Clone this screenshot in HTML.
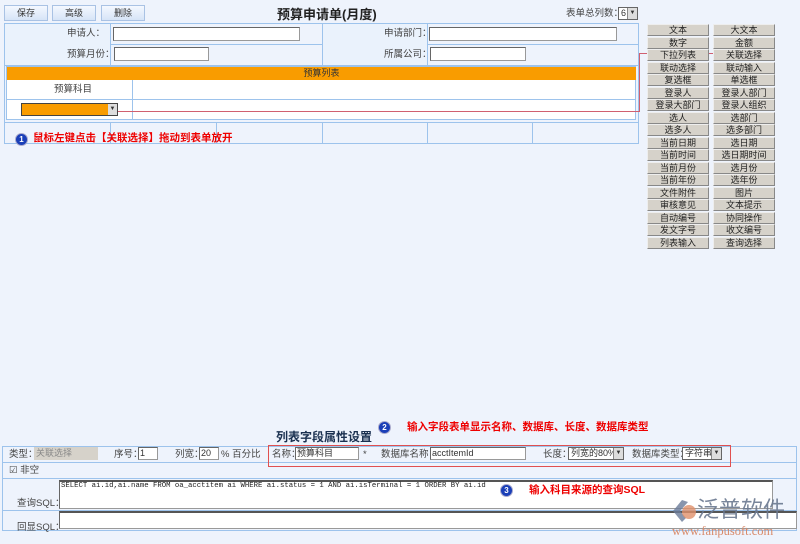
<!DOCTYPE html>
<html><head><meta charset="utf-8"><style>
*{margin:0;padding:0;box-sizing:border-box}
body{width:800px;height:544px;background:#eef3fc;font-family:"Liberation Sans","Noto Sans CJK SC",sans-serif;font-size:10px;line-height:1;color:#333;position:relative;overflow:hidden}
.a{position:absolute}
.btn{position:absolute;top:5px;height:16px;width:44px;background:linear-gradient(#f4f8ff,#d6e4f7);border:1px solid #a9c2e4;text-align:center;line-height:14px;font-size:9px}
.ln{position:absolute;background:#9dc3ec}
.inp{position:absolute;background:#fff;border:1px solid #999;border-top-color:#666;border-left-color:#666;height:14px}
.lbl{position:absolute;font-size:9.5px;color:#444;line-height:1}
.gb{position:absolute;width:62px;height:12px;background:#d6d2ca;border:1px solid #888;border-top-color:#eee;border-left-color:#eee;text-align:center;line-height:10px;font-size:9px;color:#222}
.red{color:#e00;font-weight:bold;font-size:10.5px;position:absolute;line-height:1}
.num{position:absolute;width:13px;height:13px;border-radius:50%;background:#1a3fb8;border:1px solid #aac;color:#fff;font-size:8px;font-weight:bold;text-align:center;line-height:11px}
.sel{position:absolute;background:#fff;border:1px solid #666;height:13px;font-size:9px;line-height:11px;padding-left:2px}
.sel i{position:absolute;right:0;top:0;width:10px;height:11px;background:#ddd;border-left:1px solid #888;font-style:normal;font-size:6px;text-align:center;line-height:11px}
</style></head><body>
<div class="btn" style="left:4px">保存</div>
<div class="btn" style="left:52px">高级</div>
<div class="btn" style="left:101px">删除</div>
<div class="a" style="left:277px;top:8px;font-size:13px;font-weight:bold;color:#222">预算申请单(月度)</div>
<div class="lbl" style="left:566px;top:9px">表单总列数：</div>
<div class="sel" style="left:618px;top:7px;width:20px">6<i>▼</i></div>

<div class="a" style="left:4px;top:23px;width:635px;height:121px;border:1px solid #9dc3ec"></div>
<div class="ln" style="left:4px;top:44px;width:635px;height:1px"></div>
<div class="ln" style="left:4px;top:65px;width:635px;height:1px"></div>
<div class="ln" style="left:4px;top:122px;width:635px;height:1px"></div>
<div class="ln" style="left:110px;top:23px;width:1px;height:42px"></div>
<div class="ln" style="left:322px;top:23px;width:1px;height:42px"></div>
<div class="ln" style="left:427px;top:23px;width:1px;height:42px"></div>
<div class="a" style="left:5px;top:24px;width:105px;height:41px;background:#eaf2fc"></div>
<div class="a" style="left:323px;top:24px;width:104px;height:41px;background:#eaf2fc"></div>
<div class="lbl" style="left:67px;top:29px">申请人：</div>
<div class="inp" style="left:113px;top:27px;width:187px"></div>
<div class="lbl" style="left:384px;top:29px">申请部门：</div>
<div class="inp" style="left:429px;top:27px;width:188px"></div>
<div class="lbl" style="left:67px;top:50px">预算月份：</div>
<div class="inp" style="left:114px;top:47px;width:95px"></div>
<div class="lbl" style="left:384px;top:50px">所属公司：</div>
<div class="inp" style="left:430px;top:47px;width:96px"></div>
<div class="a" style="left:6px;top:66px;width:630px;height:54px;border:1px solid #9dc3ec;background:#fff"></div>
<div class="a" style="left:7px;top:67px;width:629px;height:13px;background:#f99c00;text-align:center;font-size:9px;line-height:13px;color:#333">预算列表</div>
<div class="ln" style="left:7px;top:99px;width:629px;height:1px"></div>
<div class="ln" style="left:132px;top:80px;width:1px;height:40px"></div>
<div class="lbl" style="left:54px;top:85px">预算科目</div>
<div class="a" style="left:21px;top:103px;width:97px;height:13px;background:#f99c00;border:1px solid #444"></div>
<div class="a" style="left:108px;top:104px;width:9px;height:11px;background:#ddd;font-size:6px;text-align:center;line-height:11px">▼</div>
<div class="ln" style="left:110px;top:122px;width:1px;height:22px"></div>
<div class="ln" style="left:216px;top:122px;width:1px;height:22px"></div>
<div class="ln" style="left:322px;top:122px;width:1px;height:22px"></div>
<div class="ln" style="left:427px;top:122px;width:1px;height:22px"></div>
<div class="ln" style="left:532px;top:122px;width:1px;height:22px"></div>
<div class="a" style="left:118px;top:111px;width:522px;height:1px;background:#d06070"></div>
<div class="a" style="left:639px;top:53px;width:1px;height:59px;background:#d06070"></div>
<div class="a" style="left:639px;top:53px;width:82px;height:1px;background:#d06070"></div>
<div class="a" style="left:719px;top:52px;width:3px;height:3px;background:#e00;border-radius:50%"></div>
<div class="num" style="left:15px;top:133px">1</div>
<div class="red" style="left:33px;top:133px">鼠标左键点击【关联选择】拖动到表单放开</div>

<div class="gb" style="left:647px;top:24px">文本</div><div class="gb" style="left:713px;top:24px">大文本</div>
<div class="gb" style="left:647px;top:37px">数字</div><div class="gb" style="left:713px;top:37px">金额</div>
<div class="gb" style="left:647px;top:49px">下拉列表</div><div class="gb" style="left:713px;top:49px">关联选择</div>
<div class="gb" style="left:647px;top:62px">联动选择</div><div class="gb" style="left:713px;top:62px">联动输入</div>
<div class="gb" style="left:647px;top:74px">复选框</div><div class="gb" style="left:713px;top:74px">单选框</div>
<div class="gb" style="left:647px;top:87px">登录人</div><div class="gb" style="left:713px;top:87px">登录人部门</div>
<div class="gb" style="left:647px;top:99px">登录大部门</div><div class="gb" style="left:713px;top:99px">登录人组织</div>
<div class="gb" style="left:647px;top:112px">选人</div><div class="gb" style="left:713px;top:112px">选部门</div>
<div class="gb" style="left:647px;top:124px">选多人</div><div class="gb" style="left:713px;top:124px">选多部门</div>
<div class="gb" style="left:647px;top:137px">当前日期</div><div class="gb" style="left:713px;top:137px">选日期</div>
<div class="gb" style="left:647px;top:149px">当前时间</div><div class="gb" style="left:713px;top:149px">选日期时间</div>
<div class="gb" style="left:647px;top:162px">当前月份</div><div class="gb" style="left:713px;top:162px">选月份</div>
<div class="gb" style="left:647px;top:174px">当前年份</div><div class="gb" style="left:713px;top:174px">选年份</div>
<div class="gb" style="left:647px;top:187px">文件附件</div><div class="gb" style="left:713px;top:187px">图片</div>
<div class="gb" style="left:647px;top:199px">审核意见</div><div class="gb" style="left:713px;top:199px">文本提示</div>
<div class="gb" style="left:647px;top:212px">自动编号</div><div class="gb" style="left:713px;top:212px">协同操作</div>
<div class="gb" style="left:647px;top:224px">发文字号</div><div class="gb" style="left:713px;top:224px">收文编号</div>
<div class="gb" style="left:647px;top:237px">列表输入</div><div class="gb" style="left:713px;top:237px">查询选择</div>

<div class="num" style="left:378px;top:421px">2</div>
<div class="red" style="left:407px;top:422px">输入字段表单显示名称、数据库、长度、数据库类型</div>
<div class="a" style="left:276px;top:431px;font-size:12px;font-weight:bold;color:#1a3050">列表字段属性设置</div>
<div class="a" style="left:2px;top:446px;width:795px;height:85px;border:1px solid #9dc3ec"></div>
<div class="ln" style="left:2px;top:462px;width:795px;height:1px"></div>
<div class="ln" style="left:2px;top:478px;width:795px;height:1px"></div>
<div class="ln" style="left:2px;top:510px;width:795px;height:1px"></div>
<div class="lbl" style="left:9px;top:450px">类型：</div>
<div class="a" style="left:34px;top:447px;width:64px;height:13px;background:#d6d2ca;color:#888;font-size:9px;line-height:13px;padding-left:2px">关联选择</div>
<div class="lbl" style="left:114px;top:450px">序号：</div>
<div class="inp" style="left:138px;top:447px;width:20px;height:13px;font-size:9px;padding-left:1px;line-height:11px">1</div>
<div class="lbl" style="left:175px;top:450px">列宽：</div>
<div class="inp" style="left:199px;top:447px;width:20px;height:13px;font-size:9px;padding-left:1px;line-height:11px">20</div>
<div class="lbl" style="left:221px;top:450px">% 百分比</div>
<div class="a" style="left:268px;top:445px;width:463px;height:22px;border:1px solid #e05050"></div>
<div class="lbl" style="left:272px;top:450px">名称：</div>
<div class="inp" style="left:295px;top:447px;width:64px;height:13px;font-size:9px;padding-left:1px;line-height:11px">预算科目</div>
<div class="lbl" style="left:363px;top:450px">*</div>
<div class="lbl" style="left:381px;top:450px">数据库名称：</div>
<div class="inp" style="left:430px;top:447px;width:96px;height:13px;font-size:9px;padding-left:1px;line-height:11px">acctItemId</div>
<div class="lbl" style="left:543px;top:450px">长度：</div>
<div class="sel" style="left:568px;top:447px;width:56px">列宽的80%<i>▼</i></div>
<div class="lbl" style="left:632px;top:450px">数据库类型：</div>
<div class="sel" style="left:682px;top:447px;width:40px">字符串<i>▼</i></div>
<div class="lbl" style="left:9px;top:466px">☑ 非空</div>
<div class="lbl" style="left:17px;top:499px">查询SQL：</div>
<div class="inp" style="left:59px;top:480px;width:714px;height:29px;border-top:2px solid #555"></div>
<div class="a" style="left:61px;top:483px;font-family:'Liberation Mono',monospace;font-size:7.3px;color:#222;white-space:nowrap">SELECT ai.id,ai.name FROM oa_acctitem ai WHERE ai.status = 1 AND ai.isTerminal = 1 ORDER BY ai.id</div>
<div class="num" style="left:500px;top:484px">3</div>
<div class="red" style="left:529px;top:485px">输入科目来源的查询SQL</div>
<div class="lbl" style="left:17px;top:523px">回显SQL：</div>
<div class="inp" style="left:59px;top:511px;width:738px;height:18px;border-top:2px solid #555"></div>
<svg class="a" style="left:670px;top:498px" width="30" height="26" viewBox="0 0 30 26"><path d="M12 2 L3 13 L12 24 L16 20 L10 13 L18 4Z" fill="#6a7a98" opacity=".8"/><circle cx="19" cy="14" r="7" fill="#e0906a" opacity=".8"/></svg>
<div class="a" style="left:697px;top:499px;font-size:22px;color:#6a7890;opacity:.9">泛普软件</div>
<div class="a" style="left:672px;top:525px;font-family:'Liberation Serif',serif;font-size:12.5px;color:#d88a6a">www.fanpusoft.com</div>
</body></html>
